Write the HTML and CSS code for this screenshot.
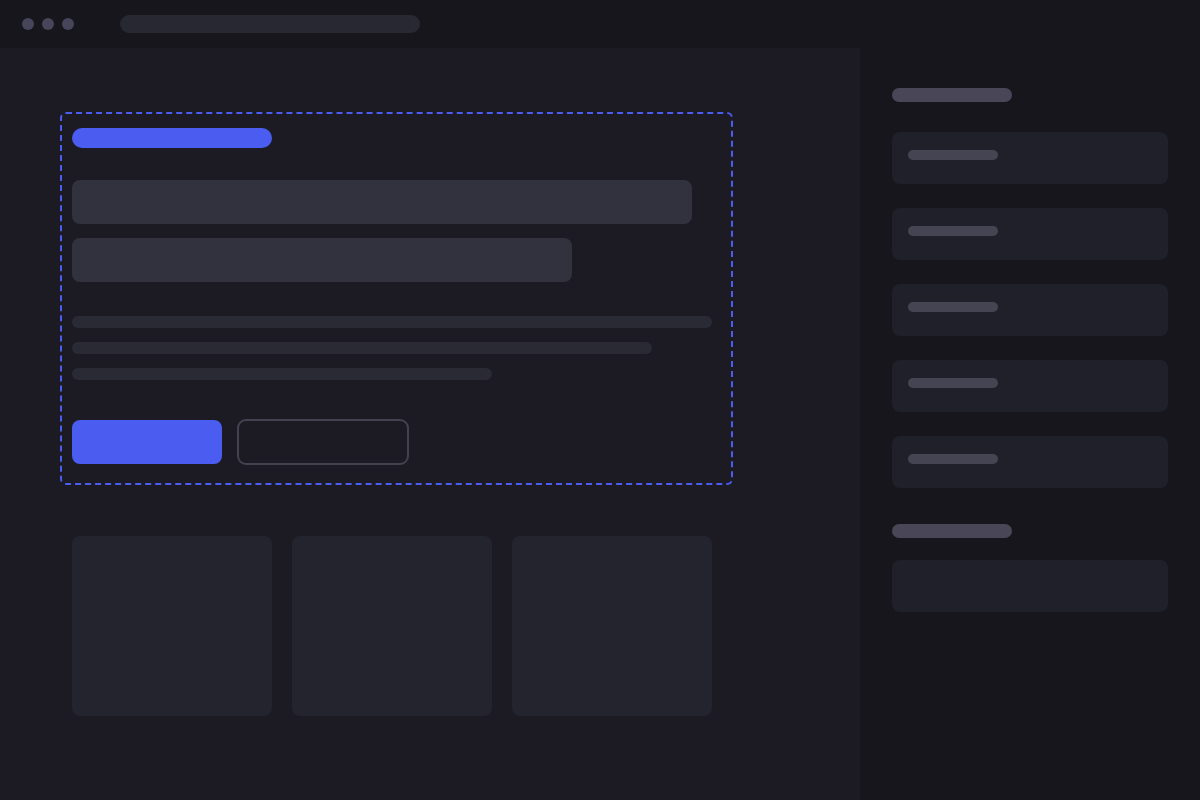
FILE: index.html
```html
<!DOCTYPE html>
<html lang="en">
<head>
<meta charset="utf-8">
<title>Wireframe</title>
<link rel="stylesheet" href="styles.css">
</head>
<body>
<div class="app">
  <header class="topbar">
    <div class="dots">
      <span class="dot"></span>
      <span class="dot"></span>
      <span class="dot"></span>
    </div>
    <div class="url"></div>
  </header>
  <div class="body">
    <main class="main">
      <section class="hero">
        <div class="badge"></div>
        <div class="titles">
          <div class="title t1"></div>
          <div class="title t2"></div>
        </div>
        <div class="lines">
          <div class="line l1"></div>
          <div class="line l2"></div>
          <div class="line l3"></div>
        </div>
        <div class="actions">
          <div class="btn primary"></div>
          <div class="btn secondary"></div>
        </div>
      </section>
      <div class="cards">
        <div class="card"></div>
        <div class="card"></div>
        <div class="card"></div>
      </div>
    </main>
    <aside class="sidebar">
      <div class="heading"></div>
      <div class="list">
        <div class="item"><div class="pill"></div></div>
        <div class="item"><div class="pill"></div></div>
        <div class="item"><div class="pill"></div></div>
        <div class="item"><div class="pill"></div></div>
        <div class="item"><div class="pill"></div></div>
      </div>
      <div class="heading heading2"></div>
      <div class="item empty"></div>
    </aside>
  </div>
</div>
</body>
</html>
```

FILE: styles.css
```css
* { box-sizing: border-box; }
html, body { margin: 0; padding: 0; }
body {
  width: 1200px;
  height: 800px;
  overflow: hidden;
  background: #1c1b24;
  font-family: "Inter", "Liberation Sans", sans-serif;
}
.app { display: flex; flex-direction: column; height: 800px; }
.topbar {
  height: 48px;
  background: #17161c;
  display: flex;
  align-items: center;
  padding-left: 22px;
  flex-shrink: 0;
}
.dots { display: flex; gap: 8px; }
.dot { width: 12px; height: 12px; border-radius: 50%; background: #46455a; }
.url {
  margin-left: 46px;
  width: 300px;
  height: 18px;
  border-radius: 9px;
  background: #282833;
}
.body { flex: 1; display: flex; }
.main {
  width: 860px;
  background: #1c1b24;
  padding: 64px 0 0 60px;
}
.hero {
  width: 673px;
  height: 373px;
  border: 2px dashed #4b5cf0;
  border-radius: 6px;
  padding: 14px 18px 18px 10px;
}
.badge { width: 200px; height: 20px; border-radius: 10px; background: #4b5cf0; }
.titles { margin-top: 32px; display: flex; flex-direction: column; gap: 14px; }
.title { height: 44px; border-radius: 8px; background: #32323e; }
.t1 { width: 620px; }
.t2 { width: 500px; }
.lines { margin-top: 34px; display: flex; flex-direction: column; gap: 14px; }
.line { height: 12px; border-radius: 6px; background: #2a2a34; }
.l1 { width: 640px; }
.l2 { width: 580px; }
.l3 { width: 420px; }
.actions { margin-top: 39px; display: flex; align-items: center; gap: 15px; }
.btn { height: 44px; border-radius: 8px; }
.primary { width: 150px; background: #4b5cf0; }
.secondary { width: 172px; height: 46px; border: 2px solid #43424f; border-radius: 9px; }
.cards {
  margin-top: 51px;
  margin-left: 12px;
  display: grid;
  grid-template-columns: repeat(3, 200px);
  gap: 20px;
}
.card { height: 180px; border-radius: 8px; background: #24242e; }
.sidebar {
  flex: 1;
  background: #17161c;
  padding: 40px 32px 0 32px;
}
.heading { width: 120px; height: 14px; border-radius: 7px; background: #484657; }
.list { margin-top: 30px; display: flex; flex-direction: column; gap: 24px; }
.item {
  height: 52px;
  border-radius: 8px;
  background: #20202a;
  padding: 18px 16px;
}
.pill { width: 90px; height: 10px; border-radius: 5px; background: #454452; }
.heading2 { margin-top: 36px; }
.empty { margin-top: 22px; }
```
